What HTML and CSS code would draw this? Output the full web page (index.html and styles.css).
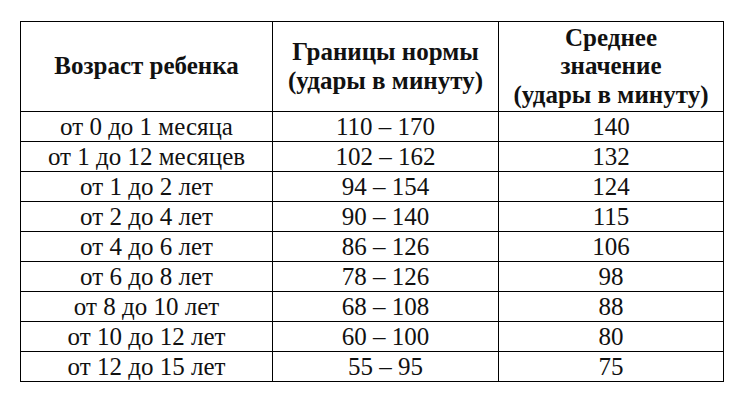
FILE: index.html
```html
<!DOCTYPE html>
<html lang="ru">
<head>
<meta charset="utf-8">
<link rel="stylesheet" href="styles.css">
</head>
<body>
<table class="pulse">
  <colgroup>
    <col class="c1"><col class="c2"><col class="c3">
  </colgroup>
  <thead>
    <tr>
      <th>Возраст ребенка</th>
      <th>Границы нормы<br>(удары в минуту)</th>
      <th>Среднее<br>значение<br>(удары в минуту)</th>
    </tr>
  </thead>
  <tbody>
    <tr><td>от 0 до 1 месяца</td><td>110 – 170</td><td>140</td></tr>
    <tr><td>от 1 до 12 месяцев</td><td>102 – 162</td><td>132</td></tr>
    <tr><td>от 1 до 2 лет</td><td>94 – 154</td><td>124</td></tr>
    <tr><td>от 2 до 4 лет</td><td>90 – 140</td><td>115</td></tr>
    <tr><td>от 4 до 6 лет</td><td>86 – 126</td><td>106</td></tr>
    <tr><td>от 6 до 8 лет</td><td>78 – 126</td><td>98</td></tr>
    <tr><td>от 8 до 10 лет</td><td>68 – 108</td><td>88</td></tr>
    <tr><td>от 10 до 12 лет</td><td>60 – 100</td><td>80</td></tr>
    <tr><td>от 12 до 15 лет</td><td>55 – 95</td><td>75</td></tr>
  </tbody>
</table>
</body>
</html>
```
FILE: styles.css
```css
html, body {
  margin: 0;
  padding: 0;
  background: #fff;
}
body {
  padding: 21px 0 0 20px;
  color: #111;
}
.pulse {
  border-collapse: collapse;
  table-layout: fixed;
  width: 703px;
}
.c1 { width: 252px; }
.c2 { width: 226px; }
.c3 { width: 225px; }
.pulse th, .pulse td {
  border: 1px solid #000;
  text-align: center;
  padding: 0;
  font-family: "Liberation Serif", "Times New Roman", "DejaVu Serif", serif;
}
.pulse th {
  height: 89px;
  font-size: 25px;
  font-weight: bold;
  line-height: 28.5px;
  vertical-align: middle;
  white-space: nowrap;
}
.pulse td {
  height: 29px;
  font-size: 25px;
  line-height: 29px;
  white-space: nowrap;
}
```
